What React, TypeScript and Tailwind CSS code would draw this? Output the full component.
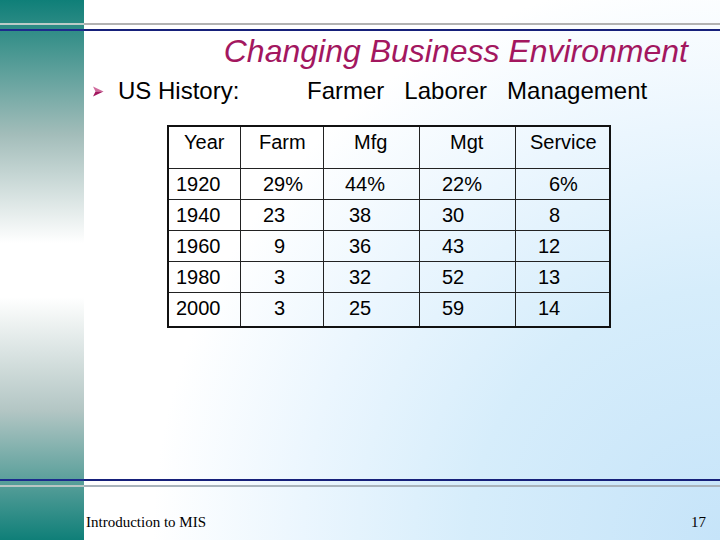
const rows = [
  { year: '1920', cells: [['29%', 'pl-[22px]'], ['44%', 'pl-[21px]'], ['22%', 'pl-[22px]'], ['6%', 'pl-[33px]']] },
  { year: '1940', cells: [['23', 'pl-[22px]'], ['38', 'pl-[25px]'], ['30', 'pl-[22px]'], ['8', 'pl-[33px]']] },
  { year: '1960', cells: [['9', 'pl-[33px]'], ['36', 'pl-[25px]'], ['43', 'pl-[22px]'], ['12', 'pl-[22px]']] },
  { year: '1980', cells: [['3', 'pl-[33px]'], ['32', 'pl-[25px]'], ['52', 'pl-[22px]'], ['13', 'pl-[22px]']] },
  { year: '2000', cells: [['3', 'pl-[33px]'], ['25', 'pl-[25px]'], ['59', 'pl-[22px]'], ['14', 'pl-[22px]']] },
]

const headers = [
  ['Year', 'pl-[15px]'],
  ['Farm', 'pl-[18px]'],
  ['Mfg', 'pl-[30px]'],
  ['Mgt', 'pl-[30px]'],
  ['Service', 'pl-[14px]'],
]

const GRID = 'grid grid-cols-[71px_83px_96px_96px_94px]'

function Rule({ side, main, h }: { side: string; main: string; h: string }) {
  return (
    <div className={`flex w-full ${h}`}>
      <div className={`w-[84px] ${side}`} />
      <div className={`flex-1 ${main}`} />
    </div>
  )
}

function Bullet() {
  return (
    <svg width="11" height="11" viewBox="0 0 11 11" className="mt-[9px]">
      <polygon points="0,0.5 10.5,5.5 2.5,5.5" fill="#d06a9c" />
      <polygon points="2.5,5.5 10.5,5.5 0,10.5" fill="#a3175f" />
    </svg>
  )
}

export default function App() {
  return (
    <div className="relative flex h-[540px] w-[720px] overflow-hidden font-['Liberation_Sans',Arial,sans-serif] text-black">
      {/* sidebar */}
      <div className="w-[84px] shrink-0 bg-[linear-gradient(to_bottom,#0f7f78_0%,#a3bdba_25%,#ffffff_45%,#ffffff_55%,#b3c6c4_76%,#0f7f78_100%)]" />

      {/* main */}
      <div className="flex flex-1 flex-col bg-[radial-gradient(circle_at_100%_100%,#c6e4f9_0%,#d6edfb_30%,#ebf6fe_50%,#ffffff_68%)]">
        <div className="pt-[33px] pr-[32px] text-right text-[32px] italic leading-[36px] text-[#a3175f]">
          Changing Business Environment
        </div>

        <div className="mt-[8px] flex text-[24px] leading-[28px]">
          <div className="ml-[9px] w-[25px]">
            <Bullet />
          </div>
          <span className="w-[189px]">US History:</span>
          <span className="whitespace-pre">Farmer   Laborer   Management</span>
        </div>

        {/* table */}
        <div className="ml-[83px] mt-[20px] w-[444px] border-2 border-[#111] text-[20px] leading-[23px]">
          <div className={`${GRID} h-[41px]`}>
            {headers.map(([label, pad], i) => (
              <div key={label} className={`pt-[4px] ${pad} ${i > 0 ? 'border-l border-[#222]' : ''}`}>
                {label}
              </div>
            ))}
          </div>
          {rows.map((r, ri) => (
            <div
              key={r.year}
              className={`${GRID} border-t border-[#222] ${ri === rows.length - 1 ? 'h-[34px]' : 'h-[31px]'}`}
            >
              <div className="pl-[7px] pt-[4px]">{r.year}</div>
              {r.cells.map(([v, pad], ci) => (
                <div key={ci} className={`border-l border-[#222] pt-[4px] ${pad}`}>
                  {v}
                </div>
              ))}
            </div>
          ))}
        </div>

        <div className="flex-1" />

        <div className="flex items-end justify-between pb-[9px] pr-[14px] font-['Liberation_Serif','Times_New_Roman',serif] text-[15px] leading-[18px]">
          <span className="ml-[2px]">Introduction to MIS</span>
          <span>17</span>
        </div>
      </div>

      {/* horizontal rules across sidebar and page */}
      <div className="absolute left-0 top-[23px] w-full">
        <Rule h="h-[2px]" side="bg-[#bccbc8]" main="bg-[#b2b2b2]" />
        <div className="h-[4px]" />
        <Rule h="h-[2px]" side="bg-[#1c2b8c]" main="bg-[#16207a]" />
      </div>
      <div className="absolute left-0 top-[479px] w-full">
        <Rule h="h-[2px]" side="bg-[#1c2b8c]" main="bg-[#16207a]" />
        <div className="h-[4px]" />
        <Rule h="h-[2px]" side="bg-[#b9c6c4]" main="bg-[#a9b3bb]" />
      </div>
    </div>
  )
}
